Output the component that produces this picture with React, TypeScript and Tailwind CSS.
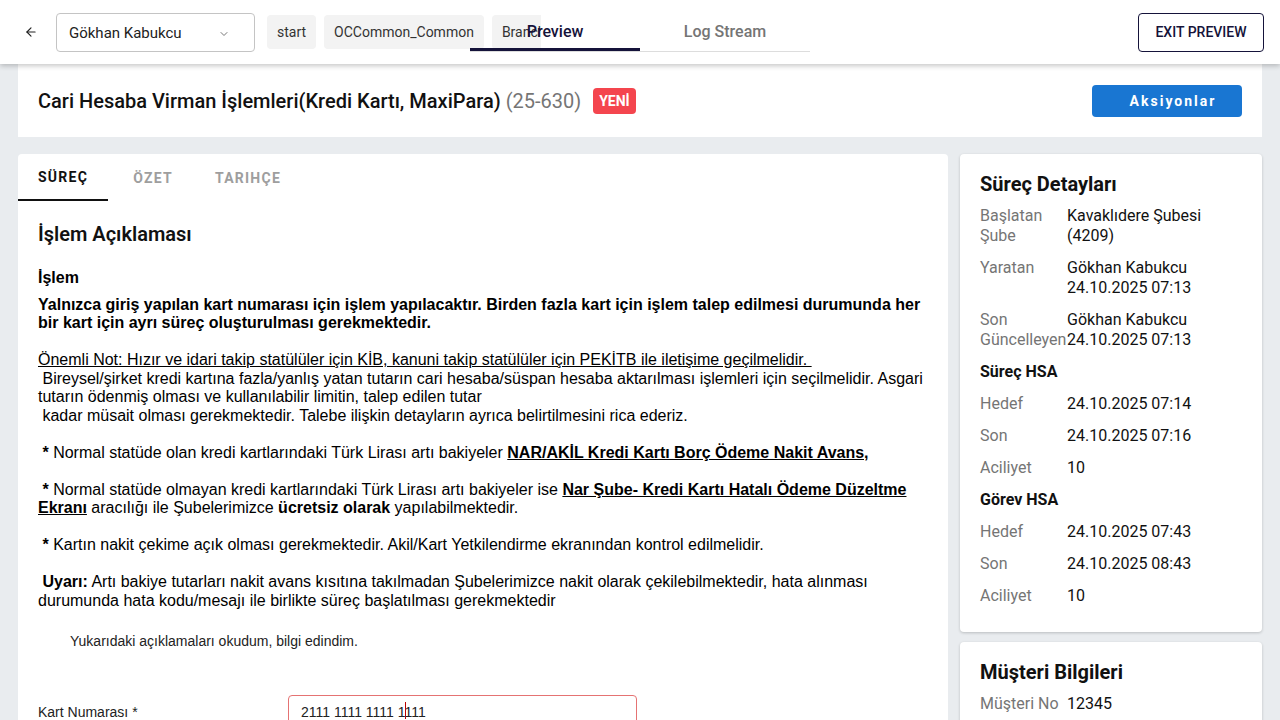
import { ArrowLeft, ChevronDown } from "lucide-react";

const roboto = { fontFamily: "Roboto, 'Noto Sans', sans-serif" };
const arial = { fontFamily: "'Liberation Sans', Arial, sans-serif" };

function DetailRow({ label, value }: { label: string; value: React.ReactNode }) {
  return (
    <div className="flex text-base leading-5">
      <div className="w-[87px] shrink-0 text-[#757575]">{label}</div>
      <div className="text-[#111]">{value}</div>
    </div>
  );
}

export default function App() {
  return (
    <div className="h-screen overflow-hidden bg-[#e9ecef] text-[#111]" style={roboto}>
      {/* top bar */}
      <header className="relative z-10 flex h-16 items-center bg-white shadow-[0_2px_5px_rgba(0,0,0,0.22)]">
        <button className="ml-6 mr-[18px] text-[#222]">
          <ArrowLeft size={14} strokeWidth={2} />
        </button>
        <div className="flex h-[39px] w-[199px] items-center justify-between rounded border border-[#c4c4c4] pl-3 pr-6 pt-[3px]">
          <span className="text-[15px] text-[#222]">Gökhan Kabukcu</span>
          <ChevronDown size={12} className="text-[#777]" />
        </div>
        <div className="ml-3 flex w-[274px] gap-2 overflow-hidden">
          <span className="flex h-[34px] shrink-0 items-center rounded bg-[#f3f3f3] px-2.5 text-sm text-[#333]">start</span>
          <span className="flex h-[34px] shrink-0 items-center rounded bg-[#f3f3f3] px-2.5 text-sm text-[#333]">OCCommon_Common</span>
          <span className="flex h-[34px] shrink-0 items-center rounded bg-[#f3f3f3] px-2.5 text-sm text-[#333]">Branch</span>
        </div>
        <div className="absolute left-[470px] top-0 flex h-[52px] w-[340px] border-b border-[#ddd]">
          <div className="flex w-[170px] items-center justify-center border-b-[3px] border-[#15133a] pt-4 text-base font-medium text-[#15133a]">
            Preview
          </div>
          <div className="flex w-[170px] items-center justify-center pb-[3px] pt-4 text-base font-medium text-[#757575]">
            Log Stream
          </div>
        </div>
        <button className="ml-auto mr-4 flex h-[39px] w-[126px] items-center justify-center rounded border border-[#15133a] text-sm font-medium text-[#15133a]">
          EXIT PREVIEW
        </button>
      </header>

      <main className="px-[18px]">
        {/* title card */}
        <section className="flex h-[73px] items-center bg-white px-5">
          <h1 className="text-xl font-medium text-[#111]">
            Cari Hesaba Virman İşlemleri(Kredi Kartı, MaxiPara){" "}
            <span className="font-normal text-[#757575]">(25-630)</span>
          </h1>
          <span className="ml-3 flex h-[26px] items-center rounded bg-[#f4454e] px-1.5 text-sm font-bold text-white">
            YENİ
          </span>
          <button className="ml-auto h-8 w-[150px] rounded bg-[#1976d2] pl-3 text-sm font-bold tracking-[2px] text-white">
            Aksiyonlar
          </button>
        </section>

        <div className="mt-[17px] flex items-start gap-3">
          {/* main card */}
          <section className="min-h-[700px] w-[930px] rounded bg-white">
            <nav className="flex text-sm font-bold tracking-[1.25px]">
              <div className="flex h-[47px] w-[90px] items-center justify-center border-b-2 border-[#111] text-[#111]">SÜREÇ</div>
              <div className="flex h-[47px] w-[90px] items-center justify-center text-[#9e9e9e]">ÖZET</div>
              <div className="flex h-[47px] w-[100px] items-center justify-center text-[#9e9e9e]">TARIHÇE</div>
            </nav>
            <div className="px-5 pt-[21px]">
              <h2 className="text-xl font-semibold leading-6">İşlem Açıklaması</h2>
              <div className="mt-[23px] text-base leading-[18.5px] text-black" style={arial}>
                <div className="font-bold">İşlem</div>
                <div className="mt-[8px] font-bold">
                  Yalnızca giriş yapılan kart numarası için işlem yapılacaktır. Birden fazla kart için işlem talep edilmesi durumunda her bir kart için ayrı süreç oluşturulması gerekmektedir.
                </div>
                <br />
                <u>Önemli Not: Hızır ve idari takip statülüler için KİB, kanuni takip statülüler için PEKİTB ile iletişime geçilmelidir.&nbsp;</u>
                <br />
                {"\u00a0"}Bireysel/şirket kredi kartına fazla/yanlış yatan tutarın cari hesaba/süspan hesaba aktarılması işlemleri için seçilmelidir. Asgari tutarın ödenmiş olması ve kullanılabilir limitin, talep edilen tutar
                <br />
                {"\u00a0"}kadar müsait olması gerekmektedir. Talebe ilişkin detayların ayrıca belirtilmesini rica ederiz.
                <br />
                <br />
                {"\u00a0"}<b>*</b> Normal statüde olan kredi kartlarındaki Türk Lirası artı bakiyeler{" "}
                <b><u>NAR/AKİL Kredi Kartı Borç Ödeme Nakit Avans,</u></b>
                <br />
                <br />
                {"\u00a0"}<b>*</b> Normal statüde olmayan kredi kartlarındaki Türk Lirası artı bakiyeler ise{" "}
                <b><u>Nar Şube- Kredi Kartı Hatalı Ödeme Düzeltme Ekranı</u></b> aracılığı ile Şubelerimizce <b>ücretsiz olarak</b> yapılabilmektedir.
                <br />
                <br />
                {"\u00a0"}<b>*</b> Kartın nakit çekime açık olması gerekmektedir. Akil/Kart Yetkilendirme ekranından kontrol edilmelidir.
                <br />
                <br />
                {"\u00a0"}<b>Uyarı:</b> Artı bakiye tutarları nakit avans kısıtına takılmadan Şubelerimizce nakit olarak çekilebilmektedir, hata alınması durumunda hata kodu/mesajı ile birlikte süreç başlatılması gerekmektedir
              </div>

              <div className="mt-[21px] pl-8 text-sm leading-5 text-[#222]" style={arial}>
                Yukarıdaki açıklamaları okudum, bilgi edindim.
              </div>

              <div className="mt-[44px] flex items-start" style={arial}>
                <label className="w-[250px] pt-[7px] text-sm text-[#222]">Kart Numarası *</label>
                <div className="flex h-10 w-[349px] items-start rounded border border-[#e57373] px-3 pt-[6px] text-sm text-[#222]">
                  2111 1111 1111 1<span className="mx-[-1px] inline-block h-[17px] w-px bg-[#b00]" />111
                </div>
              </div>
            </div>
          </section>

          {/* right column */}
          <aside className="flex w-[302px] flex-col gap-[10px]">
            <section className="rounded bg-white px-5 pb-[26px] pt-4 shadow-[0_1px_3px_rgba(0,0,0,0.2)]">
              <h3 className="text-xl font-bold leading-7">Süreç Detayları</h3>
              <div className="mt-[8px] flex flex-col gap-3">
                <DetailRow label="Başlatan Şube" value={<>Kavaklıdere Şubesi<br />(4209)</>} />
                <DetailRow label="Yaratan" value={<>Gökhan Kabukcu<br />24.10.2025 07:13</>} />
                <DetailRow label="Son Güncelleyen" value={<>Gökhan Kabukcu<br />24.10.2025 07:13</>} />
                <div className="text-base font-bold leading-5">Süreç HSA</div>
                <DetailRow label="Hedef" value="24.10.2025 07:14" />
                <DetailRow label="Son" value="24.10.2025 07:16" />
                <DetailRow label="Aciliyet" value="10" />
                <div className="text-base font-bold leading-5">Görev HSA</div>
                <DetailRow label="Hedef" value="24.10.2025 07:43" />
                <DetailRow label="Son" value="24.10.2025 08:43" />
                <DetailRow label="Aciliyet" value="10" />
              </div>
            </section>
            <section className="rounded bg-white px-5 pb-6 pt-4 shadow-[0_1px_3px_rgba(0,0,0,0.2)]">
              <h3 className="text-xl font-bold leading-7">Müşteri Bilgileri</h3>
              <div className="mt-[8px] flex flex-col gap-3">
                <DetailRow label="Müşteri No" value="12345" />
              </div>
            </section>
          </aside>
        </div>
      </main>
    </div>
  );
}
